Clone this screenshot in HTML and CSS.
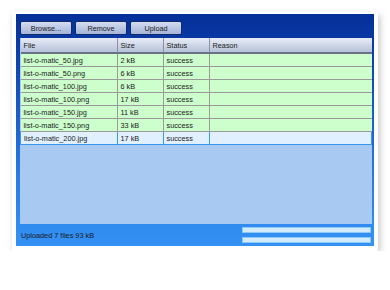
FILE: index.html
```html
<!DOCTYPE html>
<html lang="en">
<head>
    <meta charset="UTF-8">
    <title>Uploader</title>
    <link rel="stylesheet" href="styles.css">
</head>
<body>
    <div class="card">
        <div class="panel">
            <div class="toolbar">
                <button class="btn">Browse...</button>
                <button class="btn">Remove</button>
                <button class="btn">Upload</button>
            </div>
            <div class="grid">
                <table>
                    <thead>
                        <tr>
                            <th class="c-file">File</th>
                            <th class="c-size">Size</th>
                            <th class="c-status">Status</th>
                            <th>Reason</th>
                        </tr>
                    </thead>
                    <tbody>
                        <tr><td>list-o-matic_50.jpg</td><td>2 kB</td><td>success</td><td></td></tr>
                        <tr><td>list-o-matic_50.png</td><td>6 kB</td><td>success</td><td></td></tr>
                        <tr><td>list-o-matic_100.jpg</td><td>6 kB</td><td>success</td><td></td></tr>
                        <tr><td>list-o-matic_100.png</td><td>17 kB</td><td>success</td><td></td></tr>
                        <tr><td>list-o-matic_150.jpg</td><td>11 kB</td><td>success</td><td></td></tr>
                        <tr><td>list-o-matic_150.png</td><td>33 kB</td><td>success</td><td></td></tr>
                        <tr class="selected"><td>list-o-matic_200.jpg</td><td>17 kB</td><td>success</td><td></td></tr>
                    </tbody>
                </table>
            </div>
            <div class="status">
                <span>Uploaded 7 files 93 kB</span>
                <div class="bars">
                    <div class="bar"></div>
                    <div class="bar"></div>
                </div>
            </div>
        </div>
    </div>
</body>
</html>
```

FILE: styles.css
```css
body {
    margin: 0;
    background: #fff;
    font-family: "Liberation Sans", Arial, sans-serif;
    font-size: 7.3px;
    color: #1a1a1a;
}
.card {
    margin: 12px 0 0 12px;
    width: 366px;
    height: 239px;
    box-sizing: border-box;
    padding: 2px 4px 5px 4px;
    background: #fff;
    box-shadow: 2px 3px 7px rgba(0, 0, 0, 0.22);
}
.panel {
    height: 232px;
    box-sizing: border-box;
    padding: 7px 2px 0 4px;
    background: linear-gradient(#052f98 0, #0a3aa6 12%, #2a7be6 70%, #3492f4 100%);
    display: flex;
    flex-direction: column;
}
.toolbar {
    display: flex;
    gap: 3px;
    height: 14px;
    margin-bottom: 3px;
}
.btn {
    width: 52px;
    height: 14px;
    padding: 0;
    border: 1px solid #122a6a;
    border-radius: 2px;
    background: linear-gradient(#d4dcf0, #a4b4d8);
    font-family: inherit;
    font-size: 7.3px;
    color: #1a1a1a;
}
.grid {
    height: 186px;
    background: #a8c9f2;
    overflow: hidden;
}
table {
    width: 100%;
    border-collapse: collapse;
    table-layout: fixed;
}
th {
    height: 14px;
    padding: 0 3px;
    text-align: left;
    font-weight: normal;
    background: linear-gradient(#e8ecf6, #b6c2da);
    border-right: 1px solid #8a92a8;
    border-bottom: 2px solid #6a7288;
}
th:last-child {
    border-right: none;
}
.c-file { width: 90px; }
.c-size { width: 39px; }
.c-status { width: 39px; }
td {
    height: 12px;
    padding: 0 3px;
    background: #ccffcc;
    border: 1px solid #9a9a9a;
    white-space: nowrap;
    overflow: hidden;
}
td:first-child { border-left: none; }
td:last-child { border-right: none; }
.selected td {
    background: #e0f0ff;
    border: 1px solid #3a98ec;
}
.status {
    flex: 1;
    display: flex;
    justify-content: space-between;
    align-items: center;
    padding: 0 1px 0 1px;
}
.bars {
    display: flex;
    flex-direction: column;
    gap: 4px;
}
.bar {
    width: 127px;
    height: 4px;
    background: #d2ecfc;
    border: 1px solid #8ccaf8;
}
```
